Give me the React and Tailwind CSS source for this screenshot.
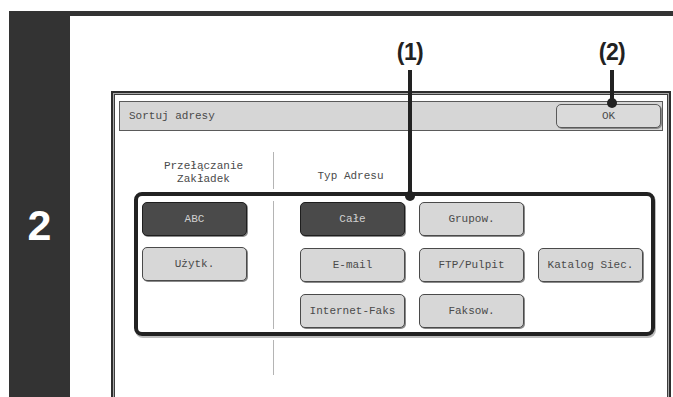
import React from 'react'

const mono = { fontFamily: '"Courier New", "Nimbus Mono PS", "FreeMono", "Liberation Mono", monospace' }

function Btn({ label, active }) {
  return (
    <div
      className={`h-[34px] w-[105px] flex items-center justify-center rounded-[5px] border text-[11px] shadow-[1px_1px_0_#8a8a8a] ${
        active ? 'bg-[#4a4a4a] border-[#1e1e1e] text-[#d0d0d0]' : 'bg-[#d7d7d7] border-[#4a4a4a] text-[#4a4a4a]'
      }`}
    >
      {label}
    </div>
  )
}

function Callout({ label, x, lineTo }) {
  return (
    <div className="absolute top-[41px] flex flex-col items-center w-[40px]" style={{ left: x - 20 }}>
      <span className="text-[23px] leading-[23px] font-bold text-[#222] tracking-tight" style={{ fontFamily: '"Liberation Sans", Arial, sans-serif' }}>
        {label}
      </span>
      <div className="w-[4px] bg-[#222] mt-[6px]" style={{ height: lineTo - 70 }} />
      <div className="w-[10px] h-[10px] rounded-full bg-[#222] -mt-[5px]" />
    </div>
  )
}

export default function App() {
  return (
    <div className="relative w-[673px] h-[397px] overflow-hidden bg-white pt-[11px] pl-[9px] flex flex-col">
      <div className="h-[5px] bg-[#333] shrink-0" />
      <div className="flex flex-1 min-h-0">
        <div className="w-[61px] bg-[#333] shrink-0 flex justify-center pt-[188px]">
          <span className="text-white font-bold text-[43px] leading-[43px]" style={{ fontFamily: '"Liberation Sans", Arial, sans-serif' }}>
            2
          </span>
        </div>

        <div className="flex-1 pl-[41px] pt-[75px] pr-[2px]">
          {/* dialog */}
          <div className="h-[330px] border-2 border-[#2e2e2e] bg-[#a8a8a8] p-px" style={mono}>
            <div className="h-full border border-[#3c3c3c] bg-white px-[4px] pt-[6px]">
              <div className="h-[30px] border border-[#5a5a5a] bg-[#d6d6d6] flex items-center justify-between pl-[9px] pr-[1px]">
                <span className="text-[11px] text-[#4a4a4a]">Sortuj adresy</span>
                <div className="h-[24px] w-[105px] flex items-center justify-center rounded-[5px] border border-[#5a5a5a] bg-[#dadada] text-[11px] text-[#4a4a4a] shadow-[1px_1px_0_#8a8a8a]">
                  OK
                </div>
              </div>

              {/* headers */}
              <div className="flex ml-[15px] mt-[21px] h-[37px]">
                <div className="w-[139px] flex flex-col items-center pt-[8px] text-[11px] leading-[13px] text-[#4a4a4a]">
                  <span>Przełączanie</span>
                  <span>Zakładek</span>
                </div>
                <div className="w-px bg-[#b4b4b4]" />
                <div className="w-[153px] flex justify-center items-end pb-[5px] text-[11px] text-[#4a4a4a]">
                  Typ Adresu
                </div>
              </div>

              {/* selection box (1) */}
              <div className="ml-[15px] mt-[3px] w-[521px] h-[144px] border-4 border-[#222] rounded-[8px] shadow-[1px_2px_0_#bdbdbd] flex pt-[6px] pl-[4px]">
                <div className="w-[131px] flex flex-col gap-[11px]">
                  <Btn label="ABC" active />
                  <Btn label="Użytk." />
                </div>
                <div className="w-px bg-[#b4b4b4] mb-[3px] -mt-px" />
                <div className="pl-[26px] grid grid-cols-[105px_105px_105px] gap-x-[14px] gap-y-[12px] content-start">
                  <Btn label="Całe" active />
                  <Btn label="Grupow." />
                  <div />
                  <Btn label="E-mail" />
                  <Btn label="FTP/Pulpit" />
                  <Btn label="Katalog Siec." />
                  <Btn label="Internet-Faks" />
                  <Btn label="Faksow." />
                </div>
              </div>

              <div className="ml-[154px] mt-[4px] w-px h-[35px] bg-[#b4b4b4]" />
            </div>
          </div>
        </div>
      </div>

      <Callout label="(1)" x={410} lineTo={196} />
      <Callout label="(2)" x={612} lineTo={103} />
    </div>
  )
}
